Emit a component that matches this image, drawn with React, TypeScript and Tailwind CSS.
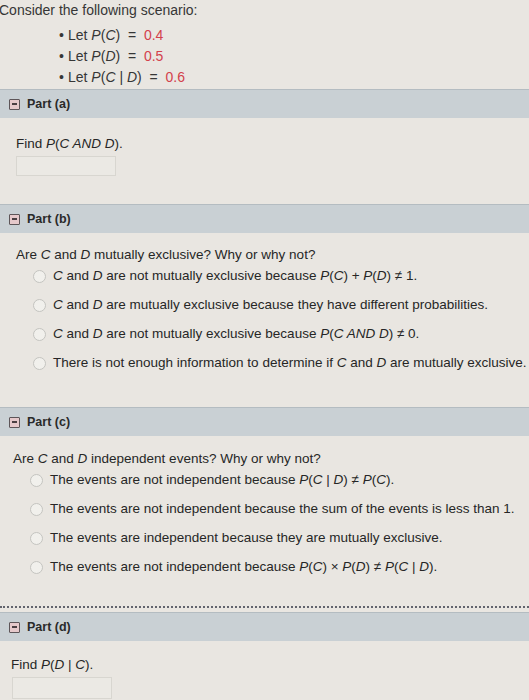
import React from 'react';

const PartHeader: React.FC<{ label: string }> = ({ label }) => (
  <div className="flex items-center h-[29px] bg-[#c9d0d4] border-t border-[#b4bcc1] pl-[9px]">
    <span className="w-[11px] h-[11px] border border-[#5d5558] bg-[#e6c9cb] rounded-[1px] flex items-center justify-center mr-[7px]">
      <span className="w-[5px] h-[1.5px] bg-[#4a3f42]" />
    </span>
    <span className="font-bold text-[12.5px] text-[#2a2a2a]">{label}</span>
  </div>
);

const Radio: React.FC<{ children: React.ReactNode }> = ({ children }) => (
  <div className="flex items-center h-[29px]">
    <span className="w-[13px] h-[13px] rounded-full border-[1.5px] border-[#c4c4c0] bg-[#f1f0ec] mr-[7px] -ml-[1px]" />
    <span>{children}</span>
  </div>
);

const I: React.FC<{ children: React.ReactNode }> = ({ children }) => <i>{children}</i>;

export default function App() {
  return (
    <div className="w-[529px] h-[700px] overflow-hidden bg-[#e9e6e1] text-[#262626] font-['Liberation_Sans',Arial,sans-serif]">
      {/* Scenario */}
      <div className="h-[89px] text-[14px] text-[#363636]">
        <div className="h-[21px] leading-[21px] -ml-[1px]">Consider the following scenario:</div>
        <ul className="pl-[59px] pt-[4px]">
          <li className="h-[21px] leading-[21px] flex">
            <span className="w-[9px]">•</span>Let&nbsp;<I>P</I>(<I>C</I>)&nbsp;&nbsp;=&nbsp;&nbsp;<span className="text-[#d3414c]">0.4</span>
          </li>
          <li className="h-[21px] leading-[21px] flex">
            <span className="w-[9px]">•</span>Let&nbsp;<I>P</I>(<I>D</I>)&nbsp;&nbsp;=&nbsp;&nbsp;<span className="text-[#d3414c]">0.5</span>
          </li>
          <li className="h-[21px] leading-[21px] flex">
            <span className="w-[9px]">•</span>Let&nbsp;<I>P</I>(<I>C</I>&nbsp;|&nbsp;<I>D</I>)&nbsp;&nbsp;=&nbsp;&nbsp;<span className="text-[#d3414c]">0.6</span>
          </li>
        </ul>
      </div>

      {/* Part (a) */}
      <PartHeader label="Part (a)" />
      <div className="h-[86px] pl-[16px] pt-[17px] text-[13.5px]">
        <div className="h-[18px] leading-[18px]">Find <I>P</I>(<I>C AND D</I>).</div>
        <div className="mt-[3px] w-[100px] h-[20px] border border-[#d8d6d0] bg-[#ebe9e4]" />
      </div>

      {/* Part (b) */}
      <PartHeader label="Part (b)" />
      <div className="h-[174px] pl-[16px] pt-[13px] text-[13.5px]">
        <div className="h-[18px] leading-[18px]">
          Are <I>C</I> and <I>D</I> mutually exclusive? Why or why not?
        </div>
        <div className="pl-[18px] -mt-[2px]">
          <Radio><I>C</I> and <I>D</I> are not mutually exclusive because <I>P</I>(<I>C</I>) + <I>P</I>(<I>D</I>) ≠ 1.</Radio>
          <Radio><I>C</I> and <I>D</I> are mutually exclusive because they have different probabilities.</Radio>
          <Radio><I>C</I> and <I>D</I> are not mutually exclusive because <I>P</I>(<I>C AND D</I>) ≠ 0.</Radio>
          <Radio>There is not enough information to determine if <I>C</I> and <I>D</I> are mutually exclusive.</Radio>
        </div>
      </div>

      {/* Part (c) */}
      <PartHeader label="Part (c)" />
      <div className="h-[170px] pl-[13px] pt-[14px] text-[13.5px]">
        <div className="h-[18px] leading-[18px]">
          Are <I>C</I> and <I>D</I> independent events? Why or why not?
        </div>
        <div className="pl-[18px] -mt-[2px]">
          <Radio>The events are not independent because <I>P</I>(<I>C</I> | <I>D</I>) ≠ <I>P</I>(<I>C</I>).</Radio>
          <Radio>The events are not independent because the sum of the events is less than 1.</Radio>
          <Radio>The events are independent because they are mutually exclusive.</Radio>
          <Radio>The events are not independent because <I>P</I>(<I>C</I>) × <I>P</I>(<I>D</I>) ≠ <I>P</I>(<I>C</I> | <I>D</I>).</Radio>
        </div>
      </div>

      {/* dotted divider */}
      <div className="h-[2px] border-t-2 border-dotted border-[#62646d]" />
      <div className="h-[4px]" />

      {/* Part (d) */}
      <PartHeader label="Part (d)" />
      <div className="pl-[11px] pt-[15px] text-[13.5px]">
        <div className="h-[18px] leading-[18px]">Find <I>P</I>(<I>D</I> | <I>C</I>).</div>
        <div className="mt-[3px] ml-[1px] w-[100px] h-[22px] border border-[#d8d6d0] bg-[#ebe9e4]" />
      </div>
    </div>
  );
}
